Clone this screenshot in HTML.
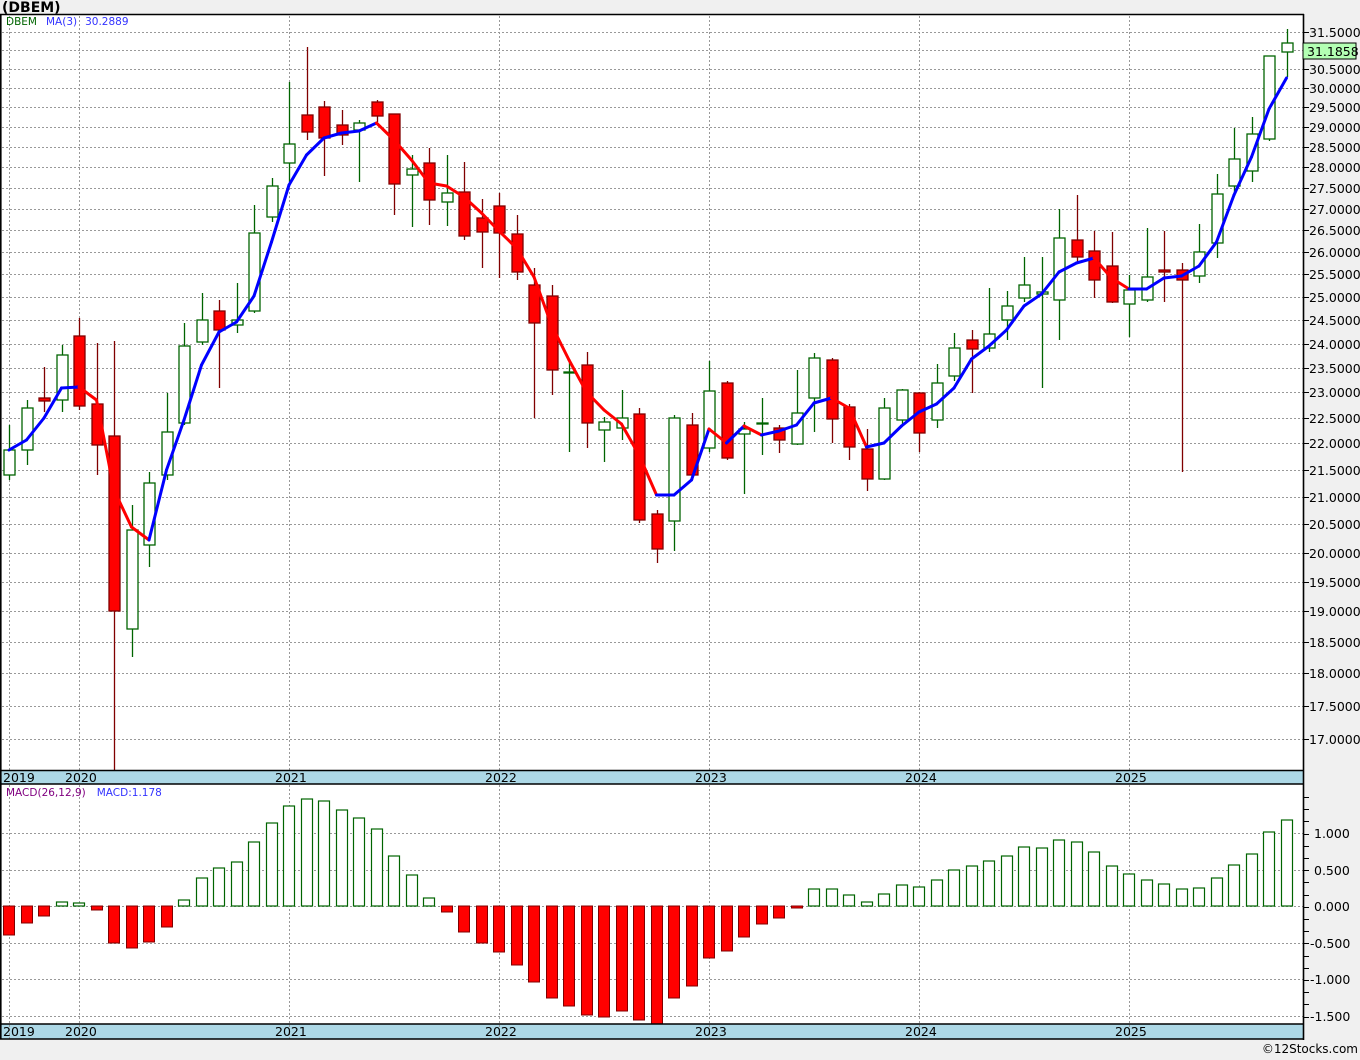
<!DOCTYPE html>
<html><head><meta charset="utf-8">
<style>
html,body{margin:0;padding:0;background:#f0f0f0;}
body{width:1360px;height:1056px;overflow:hidden;font-family:"DejaVu Sans","Liberation Sans",sans-serif;}
svg text{font-family:"DejaVu Sans","Liberation Sans",sans-serif;}
</style></head><body>
<svg id="c" width="1360" height="1056" viewBox="0 0 1360 1056" xmlns="http://www.w3.org/2000/svg">
<rect x="0" y="0" width="1360" height="1056" fill="#f0f0f0"/>
<text x="2" y="12" font-size="14" font-weight="bold" fill="#000">(DBEM)</text>
<rect x="0" y="14" width="1303" height="757" fill="#fff"/>
<rect x="0" y="784" width="1303" height="240" fill="#fff"/>
<rect x="0" y="771" width="1303" height="13" fill="#add8e6"/>
<rect x="0" y="1024" width="1303" height="15" fill="#add8e6"/>
<g id="grid" stroke="#999" stroke-width="1" stroke-dasharray="2,2"></g>
<g id="plot"></g>
<g stroke="#000" stroke-width="1.6" fill="none">
<line x1="0" y1="14.5" x2="1304" y2="14.5"/>
<line x1="1303.5" y1="14" x2="1303.5" y2="1040"/>
<line x1="0" y1="770.5" x2="1304" y2="770.5"/>
<line x1="0" y1="784" x2="1304" y2="784"/>
<line x1="0" y1="1024" x2="1304" y2="1024"/>
<line x1="0" y1="1039" x2="1304" y2="1039"/>
<line x1="0.8" y1="14" x2="0.8" y2="1039"/>
</g>
<g font-size="12.5" fill="#000">
<text x="3" y="782">2019</text><text x="65" y="782">2020</text><text x="275" y="782">2021</text><text x="485" y="782">2022</text><text x="695" y="782">2023</text><text x="905" y="782">2024</text><text x="1115" y="782">2025</text>
<text x="3" y="1036">2019</text><text x="65" y="1036">2020</text><text x="275" y="1036">2021</text><text x="485" y="1036">2022</text><text x="695" y="1036">2023</text><text x="905" y="1036">2024</text><text x="1115" y="1036">2025</text>
</g>
<text x="6" y="25" font-size="10.5"><tspan fill="#006400">DBEM</tspan><tspan fill="#3333ff" dx="9">MA(3)</tspan><tspan fill="#3333ff" dx="8">30.2889</tspan></text>
<text x="6" y="796" font-size="10.5"><tspan fill="#800080">MACD(26,12,9)</tspan><tspan fill="#3333ff" dx="11">MACD:1.178</tspan></text>
<g font-size="12.5" fill="#000">
<text x="1309" y="37">31.5000</text>
<text x="1309" y="74">30.5000</text><text x="1309" y="93">30.0000</text><text x="1309" y="112">29.5000</text><text x="1309" y="132">29.0000</text><text x="1309" y="152">28.5000</text><text x="1309" y="172">28.0000</text><text x="1309" y="193">27.5000</text><text x="1309" y="214">27.0000</text><text x="1309" y="235">26.5000</text><text x="1309" y="257">26.0000</text><text x="1309" y="279">25.5000</text><text x="1309" y="302">25.0000</text><text x="1309" y="325">24.5000</text><text x="1309" y="349">24.0000</text><text x="1309" y="373">23.5000</text><text x="1309" y="397">23.0000</text><text x="1309" y="423">22.5000</text><text x="1309" y="448">22.0000</text><text x="1309" y="475">21.5000</text><text x="1309" y="502">21.0000</text><text x="1309" y="529">20.5000</text><text x="1309" y="558">20.0000</text><text x="1309" y="587">19.5000</text><text x="1309" y="616">19.0000</text><text x="1309" y="647">18.5000</text><text x="1309" y="678">18.0000</text><text x="1309" y="711">17.5000</text><text x="1309" y="744">17.0000</text>
<text x="1314" y="838">1.000</text><text x="1314" y="875">0.500</text><text x="1314" y="911">0.000</text><text x="1310" y="948">-0.500</text><text x="1310" y="984">-1.000</text><text x="1310" y="1021">-1.500</text>
</g>
<rect x="1303" y="43" width="53" height="16" fill="#b3ffb3" stroke="#000" stroke-width="1"/>
<text x="1307" y="56" font-size="12.5" fill="#000">31.1858</text>
<text x="1358" y="1053" font-size="12" fill="#000" text-anchor="end">©12Stocks.com</text>
</svg>
<script>
(function(){
var NS="http://www.w3.org/2000/svg";
function el(p,t,a){var e=document.createElementNS(NS,t);for(var k in a)e.setAttribute(k,a[k]);p.appendChild(e);return e;}
var grid=document.getElementById('grid'),plot=document.getElementById('plot');
var py=[32,50,69,88,107,127,147,167,188,209,230,252,274,297,320,344,368,392,418,443,470,497,524,553,582,611,642,673,706,739];
py.forEach(function(y){el(grid,'line',{x1:2,y1:y+.5,x2:1303,y2:y+.5});el(grid,'line',{x1:1304,y1:y+.5,x2:1309,y2:y+.5,'stroke-dasharray':'none',stroke:'#000'});});
[833,870,906,943,979,1016].forEach(function(y){el(grid,'line',{x1:2,y1:y+.5,x2:1303,y2:y+.5});});
for(var y=797;y<1024;y+=12.2)el(grid,'line',{x1:1304,y1:Math.round(y)+.5,x2:1309,y2:Math.round(y)+.5,'stroke-dasharray':'none',stroke:'#000'});
[9,79,289,499,709,919,1129].forEach(function(x){el(grid,'line',{x1:x+.5,y1:16,x2:x+.5,y2:770});el(grid,'line',{x1:x+.5,y1:785,x2:x+.5,y2:1039});});
var C=[[1,450,475,425,480],[1,408,450,400,465],[0,398,401,367,412],[1,355,400,345,412],[0,336,406,318,410],[0,404,445,343,475],[0,436,611,341,770],[1,530,629,505,657],[1,483,545,472,567],[1,432,475,393,480],[1,346,423,323,425],[1,320,342,293,345],[0,311,330,300,388],[1,320,325,283,333],[1,233,311,205,313],[1,186,217,178,222],[1,144,163,82,182],[0,115,132,47,140],[0,107,138,101,176],[0,125,135,110,145],[1,123,130,120,182],[0,102,116,100,122],[0,114,184,114,215],[1,169,175,155,227],[0,163,200,148,225],[1,193,202,155,226],[0,192,236,162,240],[0,218,232,199,268],[0,206,233,193,278],[0,234,272,215,280],[0,285,323,268,418],[0,296,370,285,395],[1,372,373,360,452],[0,365,423,352,448],[1,422,430,417,462],[1,418,428,390,440],[0,414,520,408,523],[0,514,549,510,563],[1,418,521,415,551],[0,425,475,413,480],[1,391,448,361,452],[0,383,458,381,460],[1,429,434,422,494],[1,423,424,398,455],[0,428,440,425,453],[1,413,444,370,445],[1,358,398,353,432],[0,360,419,358,443],[0,407,447,404,460],[0,449,479,429,491],[1,408,479,398,480],[1,390,420,389,425],[0,393,433,392,452],[1,383,420,364,428],[1,348,376,333,381],[0,340,349,330,393],[1,334,348,288,352],[1,306,320,291,340],[1,285,298,257,302],[1,292,294,257,388],[1,238,300,209,340],[0,240,257,195,264],[0,251,280,231,298],[0,266,302,232,303],[1,290,304,275,337],[1,277,300,228,302],[0,270,272,231,302],[0,270,280,263,472],[1,252,276,224,283],[1,194,243,174,258],[1,159,186,128,194],[1,134,171,117,182],[1,56,139,56,141],[1,43,52,29,77]];
C.forEach(function(c,i){var x=Math.round(9+17.5*i);var up=c[0];var col=up?'#006400':'#800000';
el(plot,'line',{x1:x+.5,y1:c[3],x2:x+.5,y2:c[4],stroke:col,'stroke-width':1.3});
el(plot,'rect',{x:x-5,y:c[1],width:11,height:Math.max(1,c[2]-c[1]),fill:up?'#fff':'#ff0000',stroke:col,'stroke-width':1.3});});
var M=[450,440,418,388,387,400,490,527,540,470,420,365,332,322,296,242,185,155,138,133,131,123,140,160,183,186,197,213,231,248,277,325,360,392,410,424,455,495,495,480,429,443,426,435,431,425,403,398,408,447,443,426,412,404,388,359,346,330,306,294,272,263,258,278,289,289,278,276,266,242,195,157,109,78];
for(var i=1;i<M.length;i++){var x0=9+17.5*(i-1),x1=9+17.5*i;el(plot,'line',{x1:x0,y1:M[i-1],x2:x1,y2:M[i],stroke:M[i]>M[i-1]+0.5?'#ff0000':'#0000ff','stroke-width':3,'stroke-linecap':'round'});}
var D=[935,923,916,902,903,910,943,948,942,927,900,878,868,862,842,823,806,799,801,810,818,829,856,875,898,912,932,943,952,965,982,998,1006,1015,1017,1011,1020,1024,998,986,958,951,937,924,918,908,889,889,895,902,894,885,887,880,870,866,861,856,847,848,840,842,852,866,874,880,884,889,888,878,865,854,832,820];
D.forEach(function(t,i){var x=Math.round(9+17.5*i);if(t<906){el(plot,'rect',{x:x-5.5,y:t,width:11,height:906-t,fill:'#fff',stroke:'#006400','stroke-width':1.2});}else{el(plot,'rect',{x:x-5.5,y:906,width:11,height:Math.max(1,t-906),fill:'#ff0000',stroke:'#800000','stroke-width':1});}});
})();
</script>
</body></html>
